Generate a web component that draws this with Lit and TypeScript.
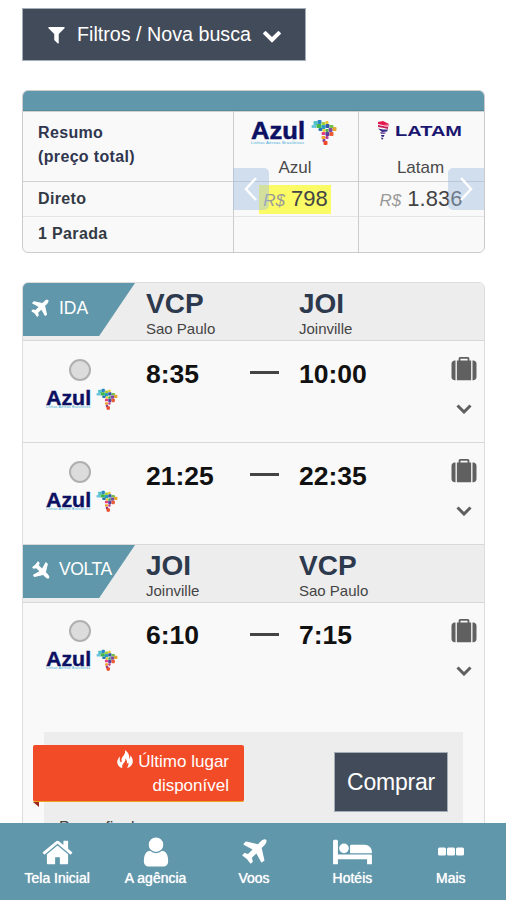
import { LitElement, html, css, svg } from "lit";
import { customElement, property } from "lit/decorators.js";

const FA: Record<string, [string, string]> = {
  plane: ["0 0 1792 1792", "M1568 160q44 52 12 148t-108 172l-161 161 160 696q5 19-12 33l-128 96q-7 6-19 6-4 0-7-1-15-3-21-16l-279-508-259 259 53 194q5 17-8 31l-96 96q-9 9-23 9h-2q-15-2-24-13l-189-252-252-189q-11-7-13-23-1-13 9-25l96-97q9-9 23-9 6 0 8 1l194 53 259-259-508-279q-14-8-17-24-2-16 9-27l128-128q14-13 30-8l665 159 160-160q76-76 172-108t148 12z"],
  home: ["0 0 1792 1792", "M1472 992v480q0 26-19 45t-45 19h-384v-384h-256v384h-384q-26 0-45-19t-19-45v-480q0-1 .5-3t.5-3l575-474 575 474q1 2 1 6zm223-69l-62 74q-8 9-21 11h-3q-13 0-21-7l-692-577-692 577q-12 8-24 7-13-2-21-11l-62-74q-8-10-7-23.5t11-21.5l719-599q32-26 76-26t76 26l244 204v-195q0-14 9-23t23-9h192q14 0 23 9t9 23v408l219 182q10 8 11 21.5t-7 23.5z"],
  user: ["0 0 1792 1792", "M1536 1399q0 109-62.5 187t-150.5 78h-854q-88 0-150.5-78t-62.5-187q0-85 8.5-160.5t31.5-152 58.5-131 94-89 134.5-34.5q131 128 313 128t313-128q76 0 134.5 34.5t94 89 58.5 131 31.5 152 8.5 160.5zm-256-887q0 159-112.5 271.5t-271.5 112.5-271.5-112.5-112.5-271.5 112.5-271.5 271.5-112.5 271.5 112.5 112.5 271.5z"],
  filter: ["0 0 1792 1792", "M1595 295q17 41-14 70l-493 493v742q0 42-39 59-13 5-25 5-27 0-45-19l-256-256q-19-19-19-45v-486l-493-493q-31-29-14-70 17-39 59-39h1280q42 0 59 39z"],
  chevron: ["0 0 1792 1792", "M1683 808l-742 741q-19 19-45 19t-45-19l-742-741q-19-19-19-45.5t19-45.5l166-165q19-19 45-19t45 19l531 531 531-531q19-19 45-19t45 19l166 165q19 19 19 45.5t-19 45.5z"],
  bed: ["0 0 2048 1792", "M256 1024h1728q26 0 45 19t19 45v448h-256v-256h-1536v256h-256v-1216q0-26 19-45t45-19h128q26 0 45 19t19 45v704zm576-320q0-106-75-181t-181-75-181 75-75 181 75 181 181 75 181-75 75-181zm1216 256v-64q0-159-112.5-271.5t-271.5-112.5h-704q-26 0-45 19t-19 45v384h1152z"],
  suitcase: ["0 0 1792 1792", "M640 256h512v-128h-512v128zm-352 0v1408h-64q-92 0-158-66t-66-158v-960q0-92 66-158t158-66h64zm1120 0v1408h-1024v-1408h128v-160q0-40 28-68t68-28h576q40 0 68 28t28 68v160h128zm384 224v960q0 92-66 158t-158 66h-64v-1408h64q92 0 158 66t66 158z"],
  dots: ["0 0 26 26", "M1.500 8.500h5q1.500 0 1.500 1.500v5q0 1.500-1.500 1.500h-5q-1.500 0-1.500-1.500v-5q0-1.500 1.500-1.500zM10.500 8.500h5q1.500 0 1.500 1.500v5q0 1.500-1.500 1.500h-5q-1.500 0-1.500-1.500v-5q0-1.500 1.500-1.500zM19.500 8.500h5q1.500 0 1.500 1.500v5q0 1.500-1.500 1.500h-5q-1.500 0-1.500-1.500v-5q0-1.500 1.500-1.500z"],
  fire: ["0 0 16 18", "M7.800 0C8.600 2.400 7.600 4.200 6 6.200C4.600 8 4.200 9.400 4.700 11C5 12 4.300 12.600 3.700 12C2.700 11 2.500 9 3 6.500C1 8.500 0 10.500 .3 12.700C.6 15.600 2.800 17.400 5.400 18C4.800 16 5.400 14.500 6.800 13C8.200 11.500 8.600 10.300 8.300 8.500C10 10 10.300 12 9.600 13.800C10.400 13.600 10.900 13 11.100 12.200C11.900 14 11.400 16.300 9.900 18C13.500 17.200 15.700 14.800 15.800 11.600C15.900 8.900 14.800 6.900 13.200 5.300C13.500 7 13.200 8.300 12.300 9C12.600 5 11 1.600 7.800 0Z"],
};

const icon = (name: string, w: number, h = w, cls = "") =>
  html`<svg class=${cls} width=${w} height=${h} viewBox=${FA[name][0]} fill="currentColor"><path d=${FA[name][1]}></path></svg>`;

const MOSAIC: [number, number, number, number, string][] = [
  [2, 1, 4, 4, "#4fc3c9"], [6, 0, 4, 4, "#2b86c6"], [10, 2, 4, 3, "#a5cf3d"], [14, 1, 3, 3, "#e6c72e"],
  [0, 5, 5, 3, "#6cc4df"], [5, 4, 5, 4, "#45b649"], [10, 5, 4, 4, "#2a9dbb"], [14, 4, 4, 4, "#3559a8"],
  [18, 5, 4, 3, "#6fbf4a"], [21, 7, 4, 4, "#e5a72e"], [7, 8, 4, 3, "#2479b5"], [17, 8, 4, 4, "#7e4da1"],
  [11, 9, 3, 3, "#f2d23c"], [14, 9, 3, 3, "#4bb14d"], [10, 12, 4, 3, "#e33f83"], [14, 12, 4, 4, "#5a3f9f"],
  [18, 12, 4, 4, "#ec5a36"], [10, 16, 4, 3, "#f0a22e"], [14, 16, 3, 3, "#c03c97"], [11, 19, 3, 3, "#8c3c97"],
  [12, 21, 4, 4, "#ec4a28"],
];

@customElement("azul-logo")
class AzulLogo extends LitElement {
  @property({ type: Number }) width = 85;
  static styles = css`
    :host { display: block; }
    svg { display: block; overflow: visible; }
    .word { font: bold 24.500px "Liberation Sans", Arial, sans-serif; fill: #0c1062; stroke: #0c1062; stroke-width: 0.5px; }
    .tag { font: 4.200px "Liberation Sans", Arial, sans-serif; fill: #3aa9d4; }
  `;
  render() {
    return html`<svg width=${this.width} height=${(this.width * 26) / 85} viewBox="0 0 85 26">
      <text class="word" x="0" y="20" textLength="54" lengthAdjust="spacingAndGlyphs">Azul</text>
      <text class="tag" x="0" y="24.500" textLength="53">Linhas Aéreas Brasileiras</text>
      <g transform="translate(60.500 1)">
        ${MOSAIC.map(([x, y, w, h, c]) => svg`<rect x=${x} y=${y} width=${w} height=${h} rx="1" fill=${c}></rect>`)}
      </g>
    </svg>`;
  }
}

@customElement("latam-logo")
class LatamLogo extends LitElement {
  static styles = css`
    :host { display: block; }
    svg { display: block; overflow: visible; }
    .word { font: bold 14.500px "Liberation Sans", Arial, sans-serif; fill: #1b1770; }
  `;
  render() {
    return html`<svg width="85" height="22" viewBox="0 0 85 22">
      <path d="M1 2L6 1L12 4L10 6L1 4Z" fill="#e5174f"></path>
      <path d="M1 5L11 7L11 9L7 8L1 7Z" fill="#c41d58"></path>
      <path d="M6 5L12 4.500L12 6.500L8 7Z" fill="#f08aa3"></path>
      <path d="M1 8.500L6 9.500L11 9.500L10 11.500L5 12Z" fill="#3a2a86"></path>
      <path d="M3 12L9 12.500L7.500 14L4 14Z" fill="#7a5aa5"></path>
      <path d="M4 15L7.500 15L6.500 17L4.500 16.500ZM4 17.500L6.500 18L5 20Z" fill="#2a2280"></path>
      <text class="word" x="18" y="16" textLength="67" lengthAdjust="spacingAndGlyphs">LATAM</text>
    </svg>`;
  }
}

@customElement("app-root")
class AppRoot extends LitElement {
  static styles = css`
    :host { display: block; height: 900px; overflow: hidden; background: #fff; color: #222; font-family: "Liberation Sans", Arial, sans-serif; }
    * { box-sizing: border-box; }
    svg { display: block; flex: none; }
    .screen { height: 900px; display: flex; flex-direction: column; }
    .content { flex: 1; min-height: 0; overflow: hidden; padding: 8px 21px 0 22px; }
    .filters { display: flex; align-items: center; width: 284px; height: 53px; padding: 0 23px; background: #424b5a; border: 1px solid #a7adb6; color: #fff; font-size: 19.700px; }
    .filters .label { width: 174px; margin: 0 11px 0 10px; white-space: nowrap; }

    .summary { position: relative; margin-top: 29px; height: 163px; border: 1px solid #ccc; border-radius: 6px; overflow: hidden; background: #f9f9f9; display: grid; grid-template-columns: 210px 125px 1fr; grid-template-rows: 20px 70px 35px 1fr; font-size: 16px; }
    .bar { grid-column: 1 / -1; background: #6097aa; border-bottom: 1px solid #53899a; }
    .cell { border-left: 1px solid #ccc; border-top: 1px solid #e4e4e4; display: flex; align-items: center; justify-content: center; }
    .cell.head, .cell.direct { border-top-color: #d0d0d0; }
    .cell.first { border-left: 0; justify-content: flex-start; padding: 0 0 1px 15px; font-weight: bold; letter-spacing: .35px; color: #333944; }
    .cell.first.head { line-height: 24px; padding-bottom: 3px; color: #30364f; }
    .cell.top { flex-direction: column; justify-content: flex-start; padding: 7px 5px 0 0; font-size: 17px; color: #4a4a4a; }
    .name { margin: auto -3px 0 0; line-height: 24px; padding-bottom: 1px; }
    .latam { margin-top: 1px; }
    .cell.direct { padding-right: 2px; }
    .price { display: flex; align-items: baseline; gap: 6px; padding: 0 3px 0 4px; font-size: 22px; line-height: 27px; color: #444; }
    .price i { font-size: 17px; color: #999; }
    .best { background: #fbfb66; }
    .arrow { position: absolute; top: 77px; width: 36px; height: 42px; background: rgba(160, 188, 224, .45); display: flex; align-items: center; justify-content: center; }
    .prev { left: 210px; border-radius: 0 5px 5px 0; }
    .next { right: 0; border-radius: 5px 0 0 5px; }

    .flights { margin-top: 29px; border: 1px solid #ddd; border-radius: 6px 6px 0 0; background: #f9f9f9; overflow: hidden; height: 700px; }
    .leg { height: 58px; background: #ededed; border-bottom: 1px solid #d8d8d8; display: grid; grid-template-columns: 123px 153px 1fr; }
    .tag { width: 112px; height: 53px; background: #6097aa; clip-path: polygon(0 0, 100% 0, 68% 100%, 0 100%); display: flex; align-items: center; gap: 8px; padding: 0 0 2px 6px; color: #fff; font-size: 17.500px; white-space: nowrap; }
    .back .tag { padding-bottom: 4px; }
    .back .tag span { letter-spacing: -.4px; }
    .land { transform: rotate(90deg); }
    .code { font-weight: bold; font-size: 28px; line-height: 32px; color: #2d394d; padding-top: 5px; }
    .city { font-size: 15px; line-height: 17px; color: #444; }
    .flight { height: 102px; border-bottom: 1px solid #d8d8d8; display: grid; grid-template-columns: 123px 104px 49px 1fr 40px; }
    .flight.last { border-bottom: 0; height: 101px; }
    .pick { display: flex; flex-direction: column; align-items: center; padding: 18px 9px 0 0; gap: 7px; }
    .pick azul-logo { margin-right: -3px; }
    .radio { width: 22px; height: 22px; border-radius: 50%; border: 2px solid #b0b0b0; background: #dcdcdc; }
    .time { font-weight: bold; font-size: 26.500px; line-height: 30px; padding-top: 18px; color: #111; white-space: nowrap; }
    .last .time, .last .pick { padding-top: 17px; }
    .dash { width: 29px; height: 3px; margin-top: 30px; background: #444; }
    .side { display: flex; flex-direction: column; align-items: center; padding-top: 16px; gap: 22px; color: #606060; }
    .offer { position: relative; margin: 28px 21px 0; height: 110px; background: #ededed; }
    .offer::before { content: ""; display: table; }
    .buy { margin: 20px 0 0 290px; width: 114px; height: 60px; background: #424b5a; border: 1px solid #a7adb6; color: #fff; font-size: 23px; letter-spacing: -.2px; display: flex; align-items: center; justify-content: center; }
    .alert { position: absolute; left: -11px; top: 13px; width: 211px; height: 57px; padding: 5px 15px 0 0; background: #f24b27; border-radius: 2px; border-bottom: 1px solid #eca321; color: #fff; text-align: right; font-size: 17px; line-height: 24px; }
    .alert::after { content: ""; position: absolute; left: 0; top: 57px; border-top: 5px solid #9c2a1c; border-left: 6px solid transparent; }
    .alert svg { display: inline-block; vertical-align: -1px; margin-right: 5px; }
    .charge { position: absolute; left: 15px; top: 86px; font-size: 16px; line-height: 20px; color: #444; }

    .nav { flex: none; height: 77px; background: #6097aa; display: flex; padding: 0 6px 0 8px; color: #fff; font-size: 14px; }
    .item { flex: 1; display: flex; flex-direction: column; align-items: center; padding-top: 12px; text-shadow: 0 0 1px #fff; white-space: nowrap; }
    .glyph { height: 34px; display: flex; align-items: center; }
    .item .text { line-height: 18px; }
  `;

  flight(dep: string, arr: string, last = false) {
    return html`<div class="flight ${last ? "last" : ""}">
      <div class="pick"><span class="radio"></span><azul-logo .width=${71}></azul-logo></div>
      <div class="time">${dep}</div>
      <div class="dash"></div>
      <div class="time">${arr}</div>
      <div class="side">
        ${icon("suitcase", 26, 25)}
        <svg width="16" height="10" viewBox="0 0 16 10" fill="none" stroke="#606060" stroke-width="3"><path d="M1.500 1.500L8 8L14.500 1.500"></path></svg>
      </div>
    </div>`;
  }

  leg(label: string, a: string[], b: string[], back = false) {
    return html`<div class="leg ${back ? "back" : ""}">
      <div class="tag">${icon("plane", 22, 22, back ? "land" : "")}<span>${label}</span></div>
      ${[a, b].map(([code, city]) => html`<div><div class="code">${code}</div><div class="city">${city}</div></div>`)}
    </div>`;
  }

  render() {
    const nav: [string, number, number, string][] = [
      ["home", 33, 33, "Tela Inicial"], ["user", 34, 34, "A agência"], ["plane", 31, 31, "Voos"],
      ["bed", 39, 34, "Hotéis"], ["dots", 26, 26, "Mais"],
    ];
    return html`<div class="screen">
      <div class="content">
        <div class="filters">${icon("filter", 21)}<span class="label">Filtros / Nova busca</span>${icon("chevron", 20)}</div>
        <div class="summary">
          <div class="bar"></div>
          <div class="cell first head"><div>Resumo<br />(preço total)</div></div>
          <div class="cell head top"><azul-logo .width=${85}></azul-logo><span class="name">Azul</span></div>
          <div class="cell head top"><latam-logo class="latam"></latam-logo><span class="name">Latam</span></div>
          <div class="cell direct first">Direto</div>
          <div class="cell direct"><span class="price best"><i>R$</i>798</span></div>
          <div class="cell direct"><span class="price"><i>R$</i>1.836</span></div>
          <div class="cell first">1 Parada</div>
          <div class="cell"></div>
          <div class="cell"></div>
          <div class="arrow prev"><svg width="14" height="24" viewBox="0 0 14 24" fill="none" stroke="#fff" stroke-width="2.500"><path d="M12 1L2 12L12 23"></path></svg></div>
          <div class="arrow next"><svg width="14" height="24" viewBox="0 0 14 24" fill="none" stroke="#fff" stroke-width="2.500"><path d="M2 1L12 12L2 23"></path></svg></div>
        </div>
        <div class="flights">
          ${this.leg("IDA", ["VCP", "Sao Paulo"], ["JOI", "Joinville"])}
          ${this.flight("8:35", "10:00")}
          ${this.flight("21:25", "22:35")}
          ${this.leg("VOLTA", ["JOI", "Joinville"], ["VCP", "Sao Paulo"], true)}
          ${this.flight("6:10", "7:15", true)}
          <div class="offer">
            <div class="alert">${icon("fire", 16, 18)}Último lugar<br />disponível</div>
            <div class="charge">Preço final</div>
            <div class="buy">Comprar</div>
          </div>
        </div>
      </div>
      <div class="nav">
        ${nav.map(([n, w, h, t]) => html`<div class="item"><div class="glyph">${icon(n, w, h)}</div><span class="text">${t}</span></div>`)}
      </div>
    </div>`;
  }
}
